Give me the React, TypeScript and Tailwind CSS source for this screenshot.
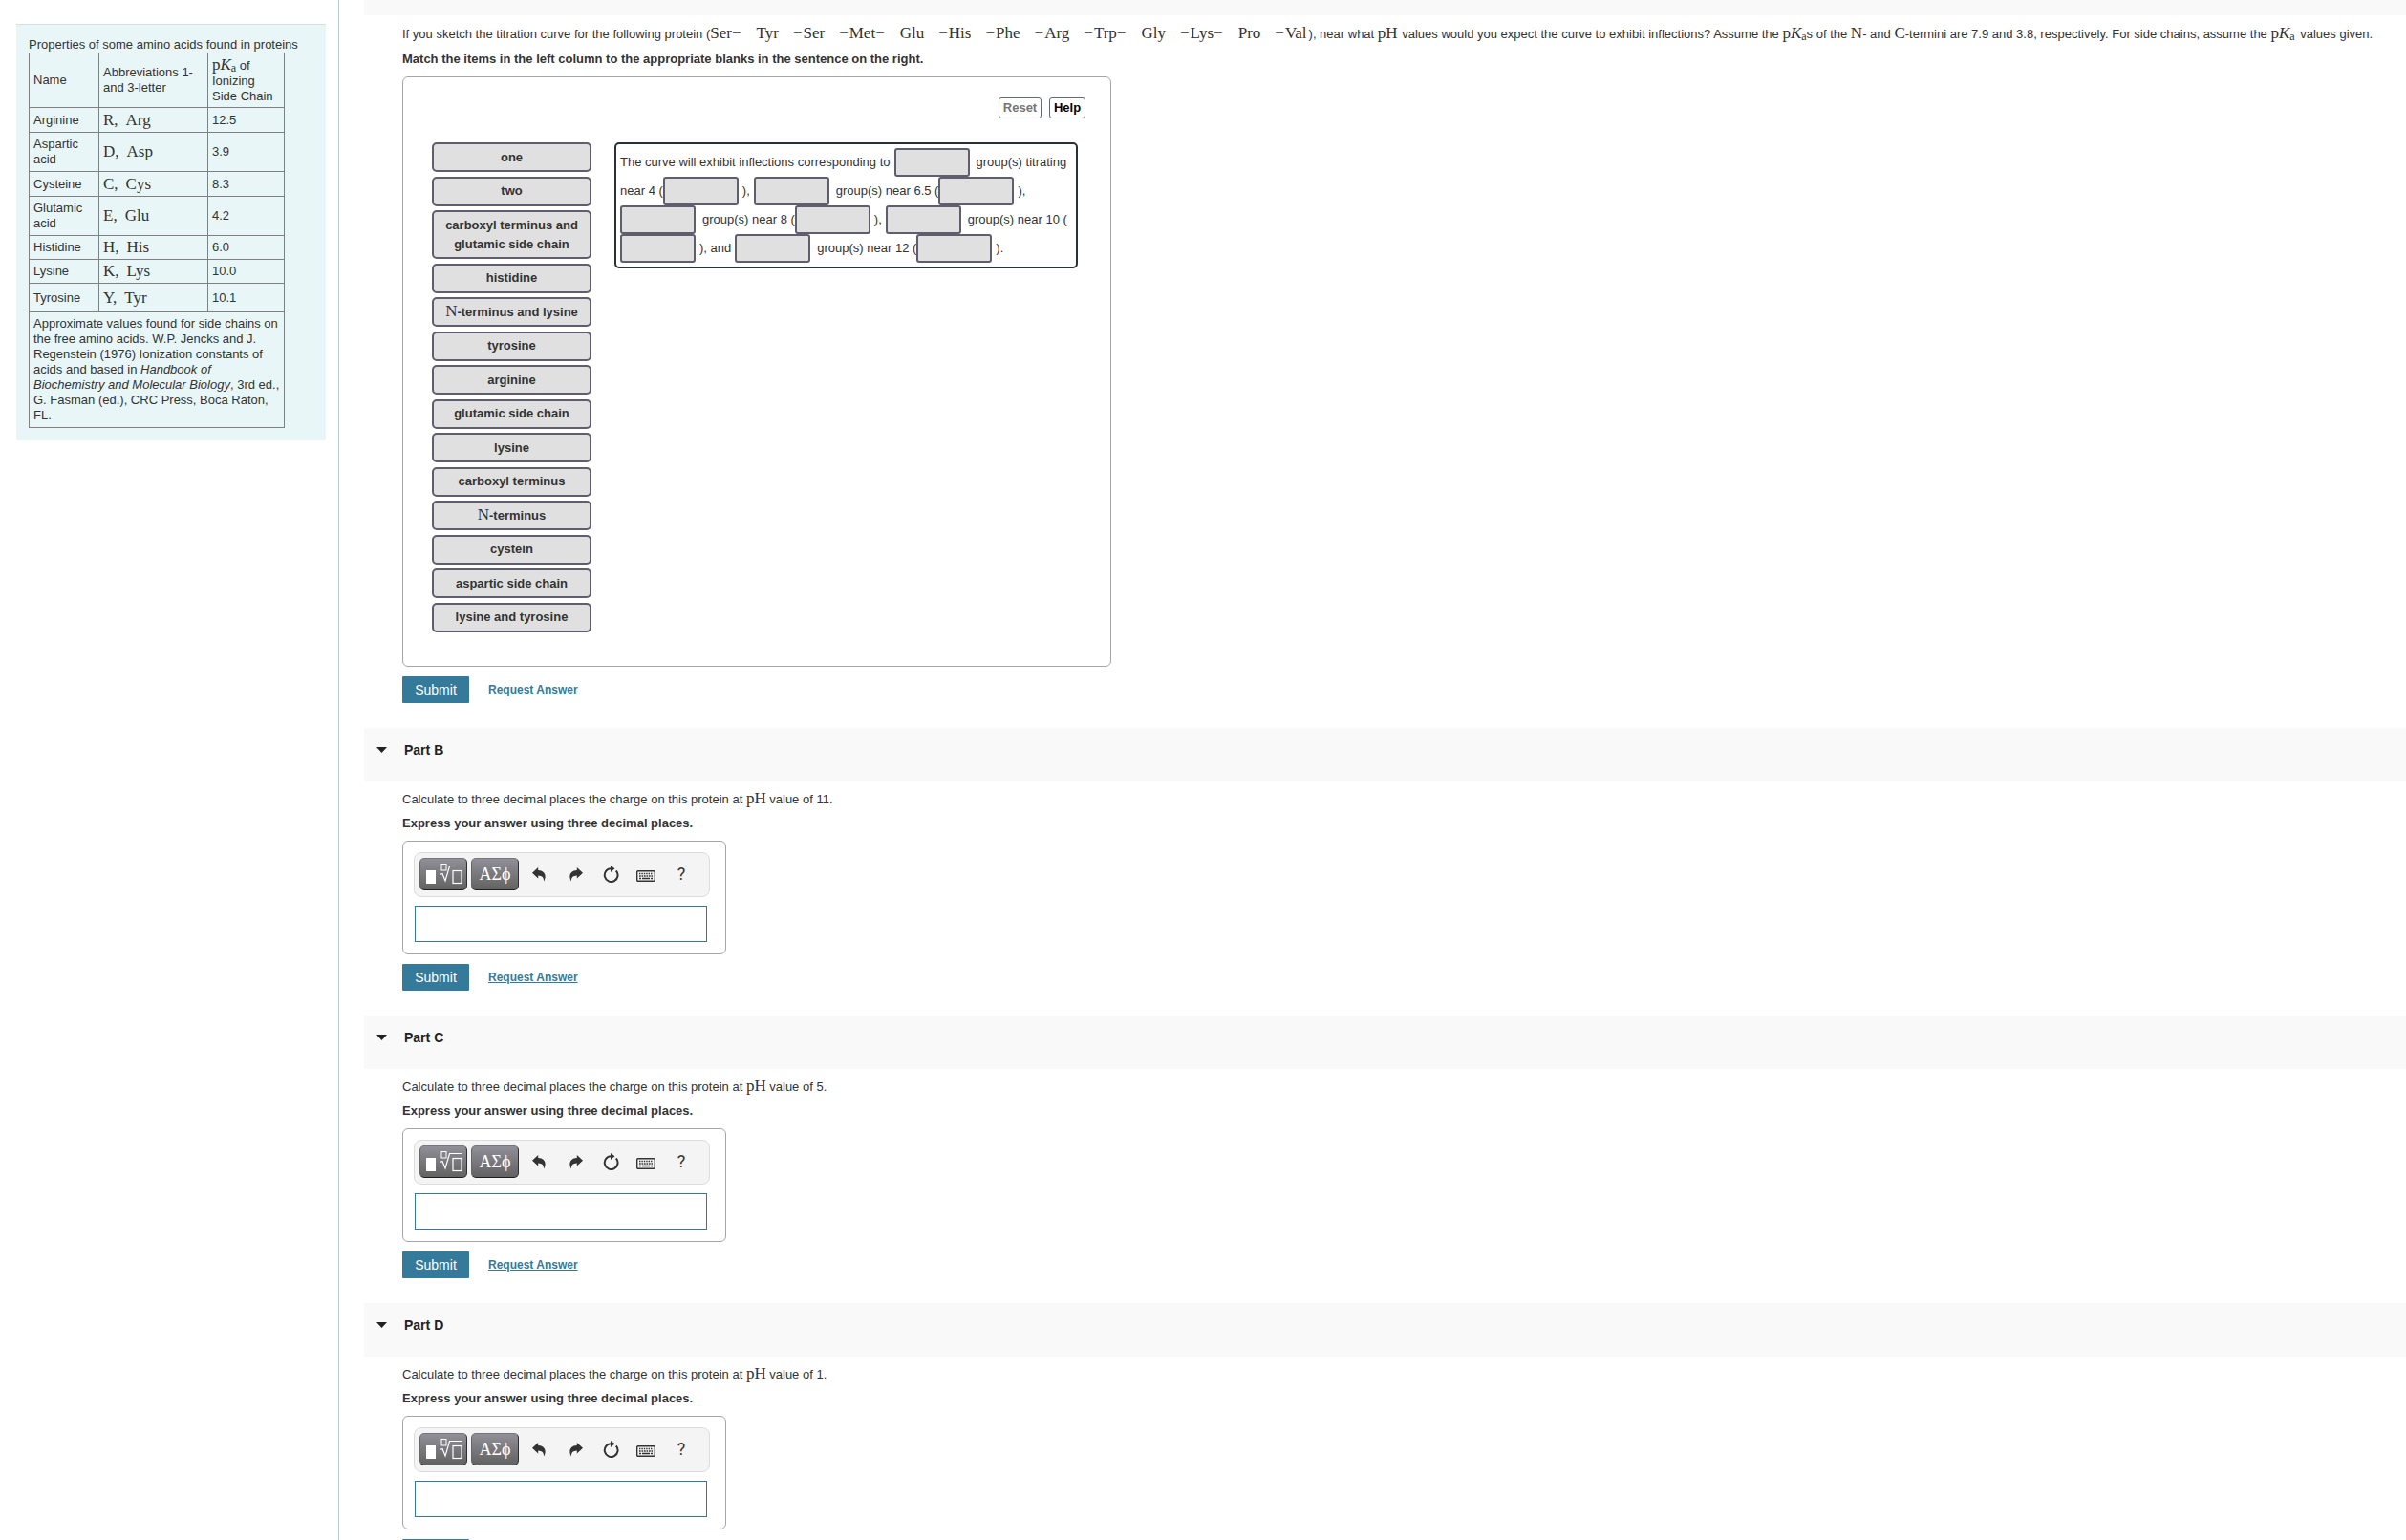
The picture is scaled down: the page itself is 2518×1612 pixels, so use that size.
import { useState } from "react";
import type { ReactNode } from "react";

const AMINO_ACIDS = [
  { name: "Arginine", short: "R,", long: "Arg", pka: "12.5", height: "h-[26px]" },
  { name: "Aspartic acid", short: "D,", long: "Asp", pka: "3.9", height: "h-[41px]" },
  { name: "Cysteine", short: "C,", long: "Cys", pka: "8.3", height: "h-[26px]" },
  { name: "Glutamic acid", short: "E,", long: "Glu", pka: "4.2", height: "h-[41px]" },
  { name: "Histidine", short: "H,", long: "His", pka: "6.0", height: "h-[25px]" },
  { name: "Lysine", short: "K,", long: "Lys", pka: "10.0", height: "h-[25px]" },
  { name: "Tyrosine", short: "Y,", long: "Tyr", pka: "10.1", height: "h-[30px]" },
];

const RESIDUES = [
  { bond: false, name: "Tyr" },
  { bond: true, name: "Ser" },
  { bond: true, name: "Met−" },
  { bond: false, name: "Glu" },
  { bond: true, name: "His" },
  { bond: true, name: "Phe" },
  { bond: true, name: "Arg" },
  { bond: true, name: "Trp−" },
  { bond: false, name: "Gly" },
  { bond: true, name: "Lys−" },
  { bond: false, name: "Pro" },
  { bond: true, name: "Val" },
];

const PARTS = [
  { id: "B", ph: "11" },
  { id: "C", ph: "5" },
  { id: "D", ph: "1" },
];

function Tex({ children }: { children: ReactNode }) {
  return <span className="font-['Liberation_Serif',serif] text-[17px] leading-none font-normal">{children}</span>;
}

function PKa() {
  return (
    <Tex>
      p<i>K</i>
      <span className="align-[-2px] text-[12px] leading-[0]">a</span>
    </Tex>
  );
}

const ITEMS: { key: string; label: ReactNode; tall?: boolean }[] = [
  { key: "one", label: "one" },
  { key: "two", label: "two" },
  { key: "carboxyl-glutamic", label: "carboxyl terminus and glutamic side chain", tall: true },
  { key: "histidine", label: "histidine" },
  { key: "n-lysine", label: <><Tex>N</Tex>-terminus and lysine</> },
  { key: "tyrosine", label: "tyrosine" },
  { key: "arginine", label: "arginine" },
  { key: "glutamic", label: "glutamic side chain" },
  { key: "lysine", label: "lysine" },
  { key: "carboxyl", label: "carboxyl terminus" },
  { key: "n", label: <><Tex>N</Tex>-terminus</> },
  { key: "cystein", label: "cystein" },
  { key: "aspartic", label: "aspartic side chain" },
  { key: "lysine-tyrosine", label: "lysine and tyrosine" },
];

function Blank() {
  return (
    <span className="inline-block h-[30px] w-[79px] shrink-0 rounded-[3px] border-2 border-[#5f5d6e] bg-[#e0e0e0]" />
  );
}

function SubmitRow() {
  return (
    <div className="mt-[10px] flex items-center gap-5">
      <button type="button" className="h-7 w-[70px] rounded-[1px] bg-[#357a9b] text-sm text-white">
        Submit
      </button>
      <a href="#request" className="text-xs font-bold text-[#357a9b] underline">
        Request Answer
      </a>
    </div>
  );
}

function Sidebar() {
  return (
    <aside className="w-[355px] shrink-0 border-r border-[#b9c9d9] pt-[25px] pl-[17px]">
      <div className="w-[324px] border-t border-[#d3e0e0] bg-[#e9f6f7] px-[13px] pt-3 pb-[13px] leading-4">
        <p id="amino-caption" className="pt-px whitespace-nowrap">
          Properties of some amino acids found in proteins
        </p>
        <table aria-labelledby="amino-caption" className="w-[268px] table-fixed border-collapse text-left">
          <colgroup>
            <col className="w-[73px]" />
            <col className="w-[114px]" />
            <col className="w-[80px]" />
          </colgroup>
          <thead>
            <tr className="h-[57px]">
              <th className="border border-[#808080] px-1 font-normal">Name</th>
              <th className="border border-[#808080] px-1 font-normal">Abbreviations 1- and 3-letter</th>
              <th className="border border-[#808080] px-1 font-normal">
                <PKa /> of Ionizing Side Chain
              </th>
            </tr>
          </thead>
          <tbody>
            {AMINO_ACIDS.map((acid) => (
              <tr key={acid.name} className={acid.height}>
                <td className="border border-[#808080] px-1">{acid.name}</td>
                <td className="border border-[#808080] px-1">
                  <Tex>
                    {acid.short}
                    <span className="ml-2">{acid.long}</span>
                  </Tex>
                </td>
                <td className="border border-[#808080] px-1">{acid.pka}</td>
              </tr>
            ))}
            <tr>
              <td colSpan={3} className="border border-[#808080] px-1 py-1">
                Approximate values found for side chains on the free amino acids. W.P. Jencks and J. Regenstein (1976)
                Ionization constants of acids and based in <i>Handbook of Biochemistry and Molecular Biology</i>, 3rd
                ed., G. Fasman (ed.), CRC Press, Boca Raton, FL.
              </td>
            </tr>
          </tbody>
        </table>
      </div>
    </aside>
  );
}

function MatchingTask() {
  return (
    <div className="mt-2 w-[742px] rounded-md border border-[#a6a6a6] pt-[21px] pr-[26px] pb-[35px] pl-[30px]">
      <div className="flex justify-end gap-2 font-bold">
        <button type="button" className="h-[22px] w-[45px] rounded-[3px] border border-[#5f6b75] text-[#757575]">
          Reset
        </button>
        <button type="button" className="h-[22px] w-[38px] rounded-[3px] border border-[#5f6b75] text-black">
          Help
        </button>
      </div>
      <div className="mt-[25px] flex items-start gap-6">
        <div className="flex min-h-[513px] w-[167px] shrink-0 flex-col justify-between">
          {ITEMS.map((item) => (
            <button
              key={item.key}
              type="button"
              className={`rounded-[5px] border-2 border-[#5f5d6e] bg-[#e0e0e0] px-1 leading-5 font-bold ${
                item.tall ? "h-[51px]" : "h-[31px]"
              }`}
            >
              {item.label}
            </button>
          ))}
        </div>
        <div className="w-[485px] shrink-0 rounded-[5px] border-2 border-[#2b2f36] px-1 py-1">
          <div className="flex items-center whitespace-nowrap">
            <span className="mr-1">The curve will exhibit inflections corresponding to</span>
            <Blank />
            <span className="ml-[7px]">group(s) titrating</span>
          </div>
          <div className="flex items-center whitespace-nowrap">
            near 4 (<Blank />
            <span className="mx-1">),</span>
            <Blank />
            <span className="ml-[7px]">group(s) near 6.5 (</span>
            <Blank />
            <span className="ml-1">),</span>
          </div>
          <div className="flex items-center whitespace-nowrap">
            <Blank />
            <span className="ml-[7px]">group(s) near 8 (</span>
            <Blank />
            <span className="mx-1">),</span>
            <Blank />
            <span className="ml-[7px]">group(s) near 10 (</span>
          </div>
          <div className="flex items-center whitespace-nowrap">
            <Blank />
            <span className="mx-1">), and</span>
            <Blank />
            <span className="ml-[7px]">group(s) near 12 (</span>
            <Blank />
            <span className="ml-1">).</span>
          </div>
        </div>
      </div>
    </div>
  );
}

function TemplatesIcon() {
  return (
    <svg width="38" height="22" viewBox="0 0 38 22" fill="none" stroke="white" aria-hidden="true">
      <rect x="0" y="7" width="10" height="14" fill="white" stroke="none" />
      <rect x="16" y="0.5" width="5" height="6.5" strokeWidth="1" />
      <path d="M14.5 11.5l2.5-1 3 7.5L24.5 2.5h13" strokeWidth="1.2" />
      <rect x="28" y="7.5" width="9" height="13" strokeWidth="1.2" />
    </svg>
  );
}

function UndoIcon({ flip }: { flip?: boolean }) {
  return (
    <svg
      width="14"
      height="15"
      viewBox="0 0 14 15"
      className={flip ? "-scale-x-100" : ""}
      fill="#333"
      aria-hidden="true"
    >
      <path d="M6.2 0v3C11 3.2 13.6 6 13.6 9.6c0 2-.7 3.7-1.6 4.9.3-3.9-1.5-5.9-5.8-6v3L0 5.7z" />
    </svg>
  );
}

function ResetIcon() {
  return (
    <svg width="17" height="18" viewBox="0 0 17 18" fill="none" aria-hidden="true">
      <path d="M8.5 3.2A6.9 6.9 0 1 0 13.8 5.5" stroke="#333" strokeWidth="2" />
      <path d="M8 0l4.5 3.2L8 7z" fill="#333" />
    </svg>
  );
}

function KeyboardIcon() {
  return (
    <svg width="20" height="12" viewBox="0 0 20 12" fill="none" aria-hidden="true">
      <rect x="0.7" y="0.7" width="18.6" height="10.6" rx="1" stroke="#333" strokeWidth="1.4" />
      <path d="M3 3.5h14" stroke="#333" strokeWidth="1.3" strokeDasharray="1.4 1" />
      <path d="M3 6h14" stroke="#333" strokeWidth="1.3" strokeDasharray="1.7 0.8" />
      <path d="M3 8.5h2M6 8.5h8M15 8.5h2" stroke="#333" strokeWidth="1.3" />
    </svg>
  );
}

const KEY_CLASS =
  "flex h-[34px] w-[50px] items-center justify-center rounded-[5px] border border-t-[#77757c] border-r-[#2e2e30] border-b-[#1e1e20] border-l-[#66656b] bg-linear-to-b from-[#918f98] to-[#626262] text-white";

function AnswerEditor({ id }: { id: string }) {
  const [value, setValue] = useState("");

  return (
    <div className="mt-2 w-[339px] rounded-md border border-[#a6a6a6] px-[11px] pt-[11px] pb-3">
      <div className="flex h-[47px] w-[310px] items-center rounded-lg border border-[#dcdcdc] bg-[#f4f4f4] pb-px pl-[5px]">
        <button type="button" aria-label="Templates" className={`pl-0.5 ${KEY_CLASS}`}>
          <TemplatesIcon />
        </button>
        <button type="button" aria-label="Symbols" className={`ml-1 ${KEY_CLASS}`}>
          <span className="font-['Liberation_Serif',serif] text-lg leading-none">ΑΣϕ</span>
        </button>
        <div className="ml-[2px] flex items-center">
          <button type="button" aria-label="Undo" className="flex w-[38px] justify-center">
            <UndoIcon />
          </button>
          <button type="button" aria-label="Redo" className="flex w-10 justify-center">
            <UndoIcon flip />
          </button>
          <button type="button" aria-label="Reset" className="flex w-8 justify-center">
            <ResetIcon />
          </button>
          <button type="button" aria-label="Keyboard shortcuts" className="flex w-[42px] justify-center pt-[3px]">
            <KeyboardIcon />
          </button>
          <button type="button" aria-label="Help" className="w-8 text-center font-[Roboto,sans-serif] text-lg">
            ?
          </button>
        </div>
      </div>
      <input
        id={`answer-${id}`}
        type="text"
        aria-label={`Answer for part ${id}`}
        value={value}
        onChange={(e) => setValue(e.target.value)}
        className="mt-[9px] ml-px block h-[38px] w-[306px] border border-[#357a9b] bg-white px-2 outline-none"
      />
    </div>
  );
}

function Part({ id, ph }: { id: string; ph: string }) {
  const [open, setOpen] = useState(true);

  return (
    <section className="mt-[26px]">
      <h2 className="h-14 bg-[#f9f9f9] pt-3 pl-[13px]">
        <button
          type="button"
          aria-expanded={open}
          onClick={() => setOpen(!open)}
          className="flex items-center gap-[18px] text-sm leading-[22px] font-bold text-[#222]"
        >
          <svg width="11" height="6" viewBox="0 0 11 6" fill="#222" aria-hidden="true">
            <path d="M0 0h11L5.5 6z" />
          </svg>
          Part {id}
        </button>
      </h2>
      {open && (
        <div className="pt-[9px] pl-10">
          <p className="leading-5">
            Calculate to three decimal places the charge on this protein at <Tex>pH</Tex> value of {ph}.
          </p>
          <p className="mt-[5px] leading-5 font-bold">Express your answer using three decimal places.</p>
          <AnswerEditor id={id} />
          <SubmitRow />
        </div>
      )}
    </section>
  );
}

export default function App() {
  return (
    <div className="flex h-screen overflow-hidden bg-white font-['Liberation_Sans',Arial,sans-serif] text-[13px] text-[#333]">
      <Sidebar />
      <main className="min-w-0 flex-1 pl-[26px]">
        <div className="h-4 bg-[#f9f9f9]" />
        <div className="pt-[10px] pl-10">
          <p className="leading-5 whitespace-nowrap">
            If you sketch the titration curve for the following protein (<Tex>Ser−</Tex>
            {RESIDUES.map((residue) => (
              <span key={residue.name} className={residue.bond ? "ml-[15px]" : "ml-4"}>
                <Tex>
                  {residue.bond && <span className="mr-px">−</span>}
                  {residue.name}
                </Tex>
              </span>
            ))}
            <span className="ml-[2px]">), near what</span> <Tex>pH</Tex>{" "}
            <span className="ml-px">values would you expect the curve to exhibit inflections?</span> Assume the <PKa />s
            of the <Tex>N</Tex>- and <Tex>C</Tex>-termini are 7.9 and 3.8, respectively. For side chains, assume the{" "}
            <PKa />
            <span className="ml-[2px]"> values given.</span>
          </p>
          <p className="mt-[6px] leading-5 font-bold">
            Match the items in the left column to the appropriate blanks in the sentence on the right.
          </p>
          <MatchingTask />
          <SubmitRow />
        </div>
        {PARTS.map((part) => (
          <Part key={part.id} id={part.id} ph={part.ph} />
        ))}
      </main>
    </div>
  );
}
